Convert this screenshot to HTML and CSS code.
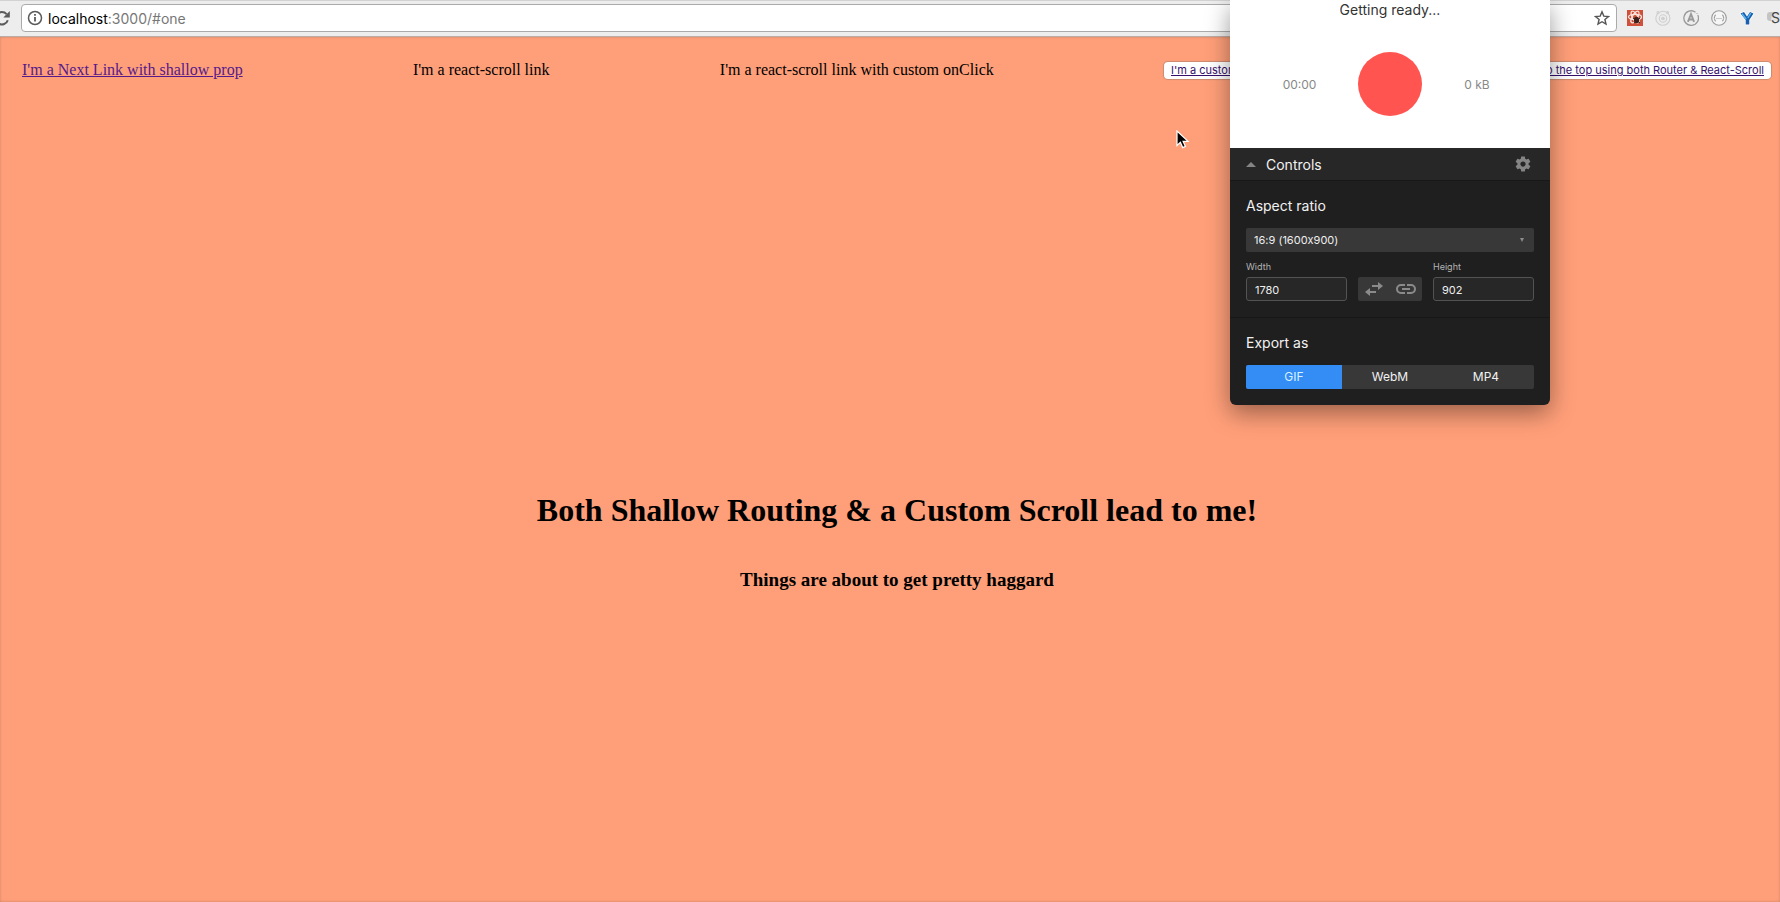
FILE: index.html
```html
<!DOCTYPE html>
<html lang="en">
<head>
<meta charset="utf-8">
<title>Shallow routing and scroll</title>
<link rel="stylesheet" href="styles.css">
</head>
<body>
<header class="browser">
  <button class="reload" aria-label="Reload"><svg width="20" height="20" viewBox="0 0 20 20" fill="none" stroke="#5a5a5a" stroke-width="2"><path d="M14.600 6.200A6.200 6.200 0 1 0 15.800 12.200"/><path d="M17.800 3v6.500h-6.500z" fill="#5a5a5a" stroke="none"/></svg></button>
  <div class="address">
    <svg width="16" height="16" viewBox="0 0 16 16" fill="none" stroke="#5a5a5a" stroke-width="1.500"><circle cx="8" cy="8" r="6.500"/><path d="M8 7v4.500M8 4v1.700" stroke-width="1.800"/></svg>
    <span class="url">localhost<span class="path">:3000/#one</span></span>
    <svg class="star" width="16" height="16" viewBox="0 0 16 16" fill="none" stroke="#555" stroke-width="1.400"><path d="M8 1.800l1.800 4.300 4.700.4-3.600 3 1.100 4.600L8 11.700l-4 2.400 1.100-4.600-3.600-3 4.700-.4z"/></svg>
  </div>
  <div class="extensions">
    <svg width="16" height="16" viewBox="0 0 16 16"><rect width="16" height="16" fill="#d0513a"/><g fill="none" stroke="#f6e3dc" stroke-width="1.300"><ellipse cx="8" cy="7" rx="6.500" ry="2.600"/><ellipse cx="8" cy="7" rx="6.500" ry="2.600" transform="rotate(60 8 7)"/><ellipse cx="8" cy="7" rx="6.500" ry="2.600" transform="rotate(120 8 7)"/></g><ellipse cx="9.500" cy="10" rx="2.600" ry="3.200" fill="#3a211b"/><path d="M6 8l7 5M13 8l-6 5" stroke="#3a211b"/></svg>
    <svg width="16" height="16" viewBox="0 0 16 16" fill="none" stroke="#cfcfcf" stroke-width="1.100"><path d="M4.500 2.200A7 7 0 1 0 13 3.500M5 2q3-1.500 6 0"/><circle cx="8" cy="8.500" r="3.700"/><circle cx="8" cy="8.500" r="1.300" fill="#cfcfcf"/><circle cx="3" cy="2.500" r="1"/><circle cx="12.500" cy="2.500" r="1" fill="#cfcfcf"/></svg>
    <svg width="16" height="16" viewBox="0 0 16 16" fill="none" stroke="#999" stroke-width="1.300"><path d="M14.800 5A7.300 7.300 0 1 1 12.500 2.200"/><circle cx="14" cy="3.500" r=".6" fill="#999" stroke="none"/><path d="M4.900 11.800L8 4l3.100 7.800M6.200 9.500h3.600" stroke-width="1.900"/></svg>
    <svg width="16" height="16" viewBox="0 0 16 16" fill="none" stroke="#9a9a9a" stroke-width="1.100"><circle cx="8" cy="8" r="7.300" fill="#f6f6f6"/><path d="M5 5q-1.300 0-1.300 1.500T2.700 8q1 0 1 1.500T5 11M11 5q1.300 0 1.300 1.500t1 1.500q-1 0-1 1.500T11 11"/><path d="M5.500 8.500h1M7.500 8.500h1M9.500 8.500h1"/></svg>
    <svg width="16" height="16" viewBox="0 0 16 16"><path d="M1.500 3.500l3.500-1.500L8 6.500 11 2l3.500 1.500L10.300 10v4.500H6.700V10z" fill="#1a5fae" stroke="#fff" stroke-width="1.400" paint-order="stroke"/><path d="M3 3.800l4.200 5.400M11.800 3.200L8.800 8" stroke="#59b5ee" stroke-width="1.400"/></svg>
    <svg width="16" height="16" viewBox="0 0 16 16"><rect y="2" width="14" height="9" rx="3" fill="#c4c4c4"/><circle cx="11" cy="9" r="7" fill="#eee" opacity=".8"/><text class="badge" x="4" y="13">S</text></svg>
  </div>
</header>
<main class="page">
  <nav class="links">
    <a class="visited" href="#one">I'm a Next Link with shallow prop</a>
    <a class="plain">I'm a react-scroll link</a>
    <a class="plain">I'm a react-scroll link with custom onClick</a>
    <button class="scroll-top"><span class="visited">I'm a custom component and I'll update the routes and then scroll back to the top using both Router &amp; React-Scroll</span></button>
  </nav>
  <section class="hero">
    <h1>Both Shallow Routing &amp; a Custom Scroll lead to me!</h1>
    <h3>Things are about to get pretty haggard</h3>
  </section>
</main>
<aside class="recorder">
  <div class="status">
    <p class="ready">Getting ready...</p>
    <div class="meter"><span>00:00</span><button class="record" aria-label="Record"></button><span>0 kB</span></div>
  </div>
  <div class="controls">
    <svg width="10" height="5" viewBox="0 0 10 5"><path d="M0 5l5-5 5 5z" fill="#858585"/></svg>
    <span>Controls</span>
    <button class="gear" aria-label="Settings"><svg width="18" height="18" viewBox="0 0 24 24" fill="#858585"><path d="M19.430 12.980c.04-.32.07-.64.07-.98s-.03-.66-.07-.98l2.110-1.650c.19-.15.24-.42.12-.64l-2-3.460c-.12-.22-.39-.3-.61-.22l-2.490 1c-.52-.4-1.080-.73-1.690-.98l-.38-2.650C14.460 2.180 14.250 2 14 2h-4c-.25 0-.46.18-.49.42l-.38 2.650c-.61.25-1.170.59-1.690.98l-2.490-1c-.23-.09-.49 0-.61.22l-2 3.460c-.13.22-.07.49.12.64l2.110 1.650c-.04.32-.07.65-.07.98s.03.66.07.98l-2.110 1.650c-.19.15-.24.42-.12.64l2 3.460c.12.22.39.3.61.22l2.490-1c.52.4 1.080.73 1.690.98l.38 2.650c.03.24.24.42.49.42h4c.25 0 .46-.18.49-.42l.38-2.650c.61-.25 1.170-.59 1.690-.98l2.490 1c.23.09.49 0 .61-.22l2-3.460c.12-.22.07-.49-.12-.64l-2.110-1.650zM12 15.500c-1.930 0-3.500-1.570-3.500-3.500s1.570-3.500 3.500-3.500 3.500 1.570 3.500 3.500-1.570 3.500-3.500 3.500z"/></svg></button>
  </div>
  <div class="group">
    <label class="title" for="ratio">Aspect ratio</label>
    <div class="select-wrap"><select id="ratio"><option>16:9 (1600x900)</option></select><svg width="4" height="4" viewBox="0 0 4 4"><path d="M0 0h4L2 4z" fill="#8b8b8b"/></svg></div>
    <div class="size">
      <div class="field"><label for="width">Width</label><input id="width" value="1780"></div>
      <div class="tools">
        <button aria-label="Swap"><svg width="18" height="16" viewBox="0 0 18 16" fill="#8b8b8b"><path d="M13 1l5 4-5 4V6H7V4h6zM5 7v3h6v2H5v3l-5-4z"/></svg></button>
        <button aria-label="Link"><svg width="20" height="12" viewBox="0 0 20 12" fill="none" stroke="#8b8b8b" stroke-width="2"><path d="M9 2H5a4 4 0 0 0 0 8h4M11 2h4a4 4 0 0 1 0 8h-4M6 6h8"/></svg></button>
      </div>
      <div class="field"><label for="height">Height</label><input id="height" value="902"></div>
    </div>
  </div>
  <div class="group export">
    <span class="title">Export as</span>
    <div class="formats"><button class="active">GIF</button><button>WebM</button><button>MP4</button></div>
  </div>
</aside>
<svg class="cursor" width="14" height="20" viewBox="0 0 14 20"><path d="M1 1v14.500l3.400-3.200 2.300 5.300 2.700-1.200-2.300-5.100h5z" fill="#000" stroke="#fff" stroke-width="1.200"/></svg>
</body>
</html>
```
FILE: styles.css
```css
* { box-sizing: border-box; }
body { margin: 0; min-height: 100vh; display: flex; flex-direction: column; overflow: hidden; background: #ff9f79; color: #000; font-family: "Liberation Serif", "Times New Roman", serif; font-size: 16px; }
button { margin: 0; padding: 0; border: 0; background: none; font-family: Inter, sans-serif; color: inherit; }
svg { flex: none; display: block; }
.browser { display: flex; align-items: center; height: 37px; padding-bottom: 1px; background: #ededed; border-top: 1px solid #d2d2d2; border-bottom: 1px solid #bcaaa4; }
.reload { width: 21px; flex: none; display: flex; justify-content: flex-end; padding-right: 9px; }
.address { flex: 1; height: 28px; display: flex; align-items: center; gap: 5px; padding: 0 6px 0 5px; background: #fff; border: 1px solid #aaa; border-radius: 4px; font-family: Inter, sans-serif; font-size: 14px; }
.path { color: #777; }
.star { margin-left: auto; }
.extensions { display: flex; gap: 12px; padding-left: 10px; margin-right: -3px; }
.badge { font: 14px Inter, sans-serif; fill: #444; }
.page { flex: 1; display: flex; flex-direction: column; box-shadow: inset 0 0 3px #c98468; }
.links { display: flex; justify-content: space-between; align-items: center; padding: 24px 9px 0 22px; line-height: 18px; }
.visited { color: #551a8b; text-decoration: underline; }
.scroll-top { height: 17px; padding: 0 7px; border-radius: 4px; background: #fff; box-shadow: 0 0 1px 1px #c98a70; font-size: 11px; line-height: 16px; white-space: nowrap; }
.scroll-top .visited { color: #36106b; }
.hero { padding: 413px 0 0 14px; text-align: center; }
h1 { margin: 0; font-size: 32px; line-height: 37px; }
h3 { margin: 40px 0 0; font-size: 19px; line-height: 22px; }
.recorder { position: absolute; top: 0; right: 230px; width: 320px; background: #1f1f1f; border-radius: 0 0 6px 6px; box-shadow: 0 8px 24px rgba(0, 0, 0, .4); color: #f2f2f2; font-family: Inter, sans-serif; font-size: 14px; overflow: hidden; }
.status { height: 148px; background: #fff; color: #333; text-align: center; }
.ready { margin: 0; line-height: 20px; }
.meter { display: grid; grid-template-columns: 1fr 64px 1fr; align-items: center; padding-top: 32px; color: #888; font-size: 12px; }
.meter span:first-child { padding-left: 11px; }
.meter span:last-child { padding-right: 18px; }
.record { width: 64px; height: 64px; border-radius: 50%; background: #ff544f; }
.controls { display: flex; align-items: center; gap: 10px; height: 33px; padding: 0 18px 0 16px; background: #272727; border-bottom: 1px solid #181818; }
.gear { margin-left: auto; }
.group { padding: 13px 16px 16px; }
.title { display: block; line-height: 24px; }
.select-wrap { display: grid; align-items: center; margin-top: 10px; }
.select-wrap > * { grid-area: 1 / 1; }
.select-wrap svg { justify-self: end; margin-right: 10px; pointer-events: none; }
select { appearance: none; width: 100%; height: 24px; padding: 0 8px; border: 0; border-radius: 2px; background: #383838; color: #eee; font: 11px Inter, sans-serif; font-variant-ligatures: no-contextual; }
.size { display: grid; grid-template-columns: 1fr 64px 1fr; column-gap: 11px; align-items: end; margin-top: 8px; }
.field label { display: block; color: #b4b4b4; font-size: 9px; line-height: 14px; }
.field input { width: 100%; height: 24px; margin-top: 3px; padding: 1px 8px 0; display: block; border: 1px solid #535353; border-radius: 3px; background: #272727; color: #eee; font: 11px Inter, sans-serif; }
.tools { display: flex; justify-content: space-around; align-items: center; height: 24px; border-radius: 2px; background: #383838; }
.export { border-top: 1px solid #181818; }
.formats { display: grid; grid-template-columns: repeat(3, 1fr); margin-top: 10px; border-radius: 2px; overflow: hidden; background: #383838; }
.formats button { height: 24px; padding-bottom: 1px; font-size: 12px; }
.formats .active { background: #348cf5; color: #d8f2ff; }
.cursor { position: absolute; left: 1176px; top: 130px; }
```
